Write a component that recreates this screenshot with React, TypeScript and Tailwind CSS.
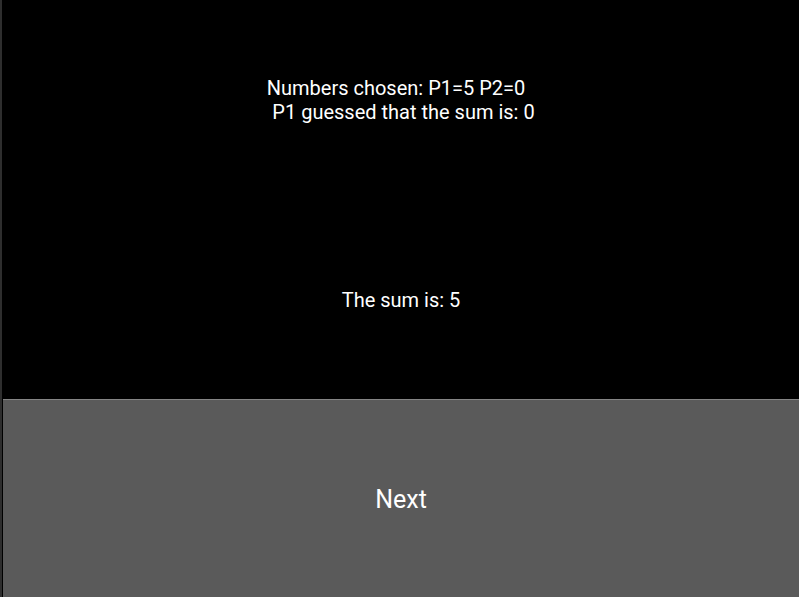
export default function App() {
  return (
    <div
      className="h-[597px] w-[799px] flex flex-col bg-black border-l-2 border-[#2e2e2e] pl-px text-white"
      style={{ fontFamily: 'Roboto, "Noto Sans", sans-serif' }}
    >
      <div className="h-[200px] flex flex-col items-center justify-center text-[20px] leading-[24px]">
        <p className="pr-[10px]">Numbers chosen: P1=5 P2=0</p>
        <p className="pl-[5px]">P1 guessed that the sum is: 0</p>
      </div>
      <div className="h-[199px] flex items-center justify-center pt-px">
        <p className="text-[20px] leading-[24px]">The sum is: 5</p>
      </div>
      <button className="h-[198px] flex items-center justify-center pt-[3px] bg-[#5a5a5a] border-t border-[#858585] text-[25px] text-white">
        Next
      </button>
    </div>
  );
}
